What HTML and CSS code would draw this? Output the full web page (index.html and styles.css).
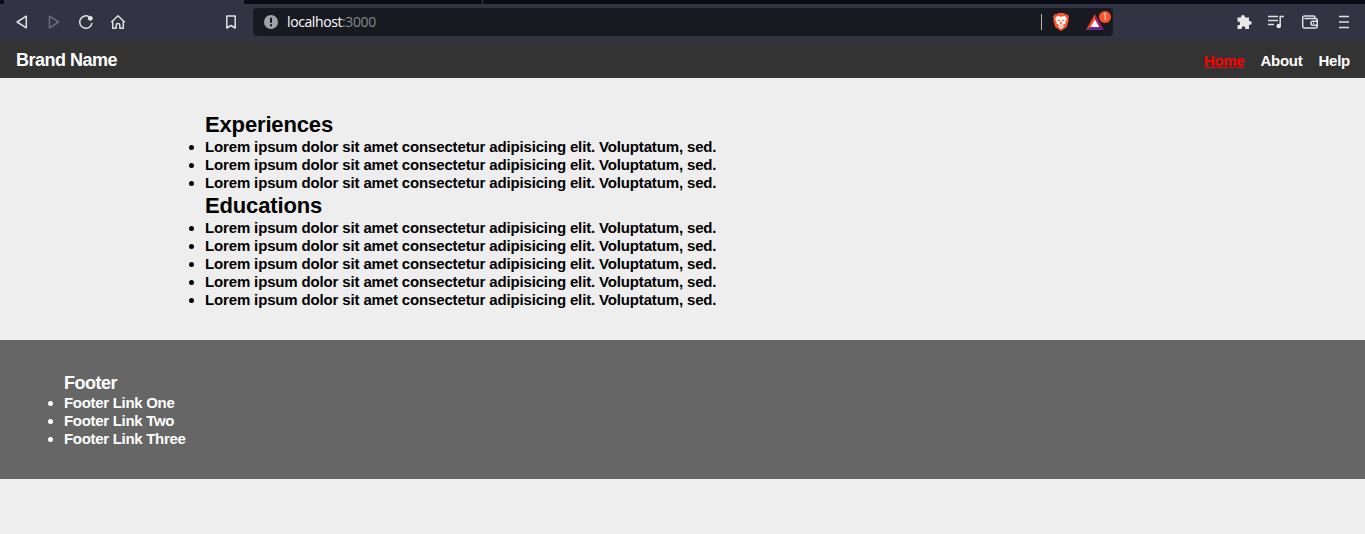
FILE: index.html
```html
<!DOCTYPE html>
<html lang="en">
<head>
<meta charset="utf-8">
<title>Brand Name</title>
<link rel="stylesheet" href="styles.css">
</head>
<body>
<div class="tabs"><span class="tab"></span><span class="tab-divider"></span></div>
<div class="toolbar">
  <div class="nav-icons">
    <svg class="icon" viewBox="0 0 16 16"><path d="M12.300 2.200v11.600L3.100 8z"/></svg>
    <svg class="icon dim" viewBox="0 0 16 16"><path d="M3.500 2.200v11.600L12.700 8z"/></svg>
    <svg class="icon" viewBox="0 0 16 16"><path d="M14 9A6.200 6.200 0 1 1 11 2.700"/><circle class="solid" cx="12.300" cy="4.300" r="2.400"/></svg>
    <svg class="icon" viewBox="0 0 16 16"><path d="M1.300 8.200 8 1.700l6.700 6.500M2.700 7.300v6.900h3.500V11q0-1.500 1.800-1.500T9.800 11v3.200h3.500V7.300"/></svg>
  </div>
  <svg class="icon bookmark" viewBox="0 0 16 16"><path d="M3.800 2h8.400v12L8 11.500 3.800 14z"/></svg>
  <div class="address">
    <svg class="info" viewBox="0 0 14 14"><circle cx="7" cy="7" r="7"/><path d="M7 2.700v5M7 9.300v2"/></svg>
    <span class="url">localhost<span class="port">:3000</span></span>
    <span class="separator"></span>
    <svg class="lion" viewBox="0 0 16 18"><path fill="#fb542b" d="M5 0h6l1.500 1.500 2-.2L16 4l-.7 2 .4 1.500-1.900 6.500L8 18l-5.800-4L.3 7.500.7 6 0 4l1.500-2.700 2 .2z"/><path fill="#fff" d="m4 3 4 .8L12 3l2 3-1.700 3 .2 1.700L9.300 12l1.700 1.300L8 16l-3-2.700L6.700 12l-3.200-1.300L3.700 9 2 6z"/><path fill="#fb542b" d="m4 6.300 3 .8-.7 1.600zM12 6.300l-3 .8.7 1.600zM7.500 8.500h1l.4 2.500-.9.600-.9-.6zM6.500 13l1.500-.6 1.500.6L8 14z"/></svg>
    <div class="rewards">
      <svg class="triangle" viewBox="0 0 18 16"><path fill="#ff4724" d="M9 0 0 16l5.300-3L9 6.500z"/><path fill="#9e1f63" d="m9 0 9 16-5.300-3L9 6.500z"/><path fill="#662d91" d="M0 16h18l-5.300-3H5.300z"/><path fill="#fff" d="m9 5.500 4.300 7.500H4.700z"/></svg>
      <span class="badge">1</span>
    </div>
  </div>
  <div class="tool-icons">
    <svg class="icon" viewBox="0 0 16 16"><path class="solid" d="M1.500 3.500H5V3a2 2 0 0 1 4 0v.5h4V7h.8a1.900 1.900 0 0 1 0 3.800H13V15H9.300v-1a1.800 1.800 0 0 0-3.600 0v1H1.500v-3.700h.7a1.900 1.900 0 0 0 0-3.800h-.7z"/></svg>
    <svg class="icon" viewBox="0 0 16 16"><path d="M0 2.500h10M0 6.500h10M0 10.500h6M12.200 12V2.500H16"/><circle class="solid" cx="10.700" cy="12" r="2.300"/></svg>
    <svg class="icon wallet" viewBox="0 0 16 16"><path d="M13 4.500V3.300q0-1.300-1.300-1.300H2.500Q.7 2 .7 3.500v8.700Q.7 14 2.500 14h11q1.800 0 1.800-1.800V6.300q0-1.800-1.800-1.800H2.300M15.300 7.200H11a2 2 0 0 0 0 4.100h4.300M11 9.300h1"/></svg>
    <svg class="icon menu" viewBox="0 0 16 16"><path d="M3 2.500h10M3 8h10M3 13.500h10"/></svg>
  </div>
</div>
<header class="header">
  <h1 class="brand">Brand Name</h1>
  <nav class="links"><a class="link active">Home</a><a class="link">About</a><a class="link">Help</a></nav>
</header>
<main class="content">
  <h2 class="title">Experiences</h2>
  <ul class="list">
    <li>Lorem ipsum dolor sit amet consectetur adipisicing elit. Voluptatum, sed.</li>
    <li>Lorem ipsum dolor sit amet consectetur adipisicing elit. Voluptatum, sed.</li>
    <li>Lorem ipsum dolor sit amet consectetur adipisicing elit. Voluptatum, sed.</li>
  </ul>
  <h2 class="title">Educations</h2>
  <ul class="list">
    <li>Lorem ipsum dolor sit amet consectetur adipisicing elit. Voluptatum, sed.</li>
    <li>Lorem ipsum dolor sit amet consectetur adipisicing elit. Voluptatum, sed.</li>
    <li>Lorem ipsum dolor sit amet consectetur adipisicing elit. Voluptatum, sed.</li>
    <li>Lorem ipsum dolor sit amet consectetur adipisicing elit. Voluptatum, sed.</li>
    <li>Lorem ipsum dolor sit amet consectetur adipisicing elit. Voluptatum, sed.</li>
  </ul>
</main>
<footer class="footer">
  <h3 class="footer-title">Footer</h3>
  <ul class="footer-list">
    <li>Footer Link One</li>
    <li>Footer Link Two</li>
    <li>Footer Link Three</li>
  </ul>
</footer>
</body>
</html>
```
FILE: styles.css
```css
* { box-sizing: border-box; margin: 0; padding: 0; }
body { background: #eee; color: #000; font: bold 15px/18px "Liberation Sans", Arial, sans-serif; overflow: hidden; }
.tabs { display: flex; height: 4px; background: #0b0c16; }
.tab { width: 240px; margin-left: 4px; background: #323443; }
.tab-divider { width: 1px; margin-left: 238px; background: #3b3d4a; }
.toolbar { display: flex; align-items: center; height: 37px; padding: 0 13px 1px 14px; background: #323443; }
.nav-icons { display: flex; gap: 16px; }
.icon { display: block; width: 16px; height: 16px; fill: none; stroke: #e0e0e2; stroke-width: 1.5; stroke-linejoin: round; }
.icon .solid { fill: #e8e8e9; stroke: none; }
.dim { stroke: #6b6d79; }
.bookmark { margin-left: 97px; }
.address { display: flex; align-items: center; width: 860px; height: 28px; margin-left: 14px; padding: 0 2px 0 11px; border-radius: 4px; background: #181a21; }
.info { width: 14px; height: 14px; fill: #a0a1aa; stroke: #181a21; stroke-width: 2; }
.info circle { stroke: none; }
.url { margin-left: 9px; color: #fff; font: 14px/20px "Open Sans", "Noto Sans", sans-serif; letter-spacing: -0.4px; }
.port { color: #85878c; }
.separator { width: 1px; height: 16px; margin-left: auto; background: #b5b6ba; }
.lion { width: 16px; height: 18px; margin-left: 11px; }
.rewards { position: relative; width: 25px; height: 20px; margin-left: 17px; }
.triangle { display: block; width: 18px; height: 16px; margin-top: 2px; }
.badge { position: absolute; top: -1px; right: 0; width: 12px; height: 12px; border-radius: 6px; background: #fb542b; color: #fff; font: 9px/12px "Open Sans", sans-serif; text-align: center; }
.tool-icons { display: flex; gap: 16px; margin-left: auto; }
.wallet, .menu { margin-left: 2px; }
.header { display: flex; align-items: center; justify-content: space-between; height: 37px; padding: 0 15px 0 16px; background: #333; color: #fff; }
.brand { font-size: 18px; line-height: 20px; letter-spacing: -0.5px; }
.links { display: flex; gap: 16px; padding-top: 2px; letter-spacing: -0.25px; }
.active { color: #f00; text-decoration: underline; }
.content { height: 262px; padding: 33px 0 0 205px; }
.title { font-size: 22px; line-height: 27px; letter-spacing: -0.15px; }
.list, .footer-list { list-style: disc; }
.list { letter-spacing: -0.15px; }
.list li::marker, .footer-list li::marker { font-size: 16px; }
.footer { height: 139px; padding: 33px 0 0 64px; background: #666; color: #fff; }
.footer-title { font-size: 18px; line-height: 21px; letter-spacing: -0.5px; }
.footer-list { letter-spacing: -0.3px; }
```
